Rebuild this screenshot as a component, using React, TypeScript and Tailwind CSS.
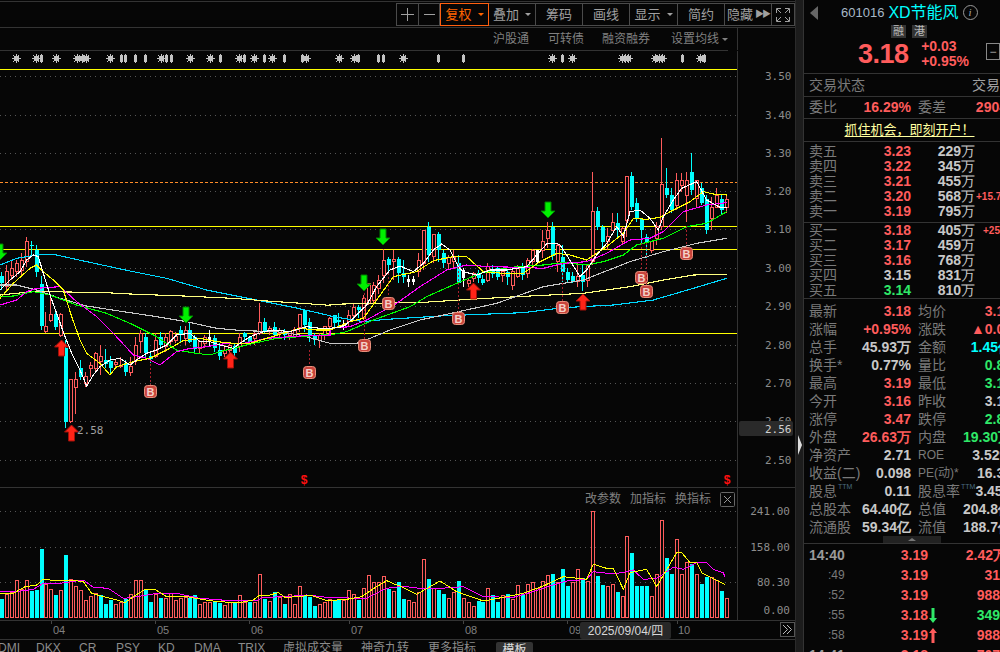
import React from "react"

const RED = "#ff5c5c"
const CYAN = "#00ffff"

type Candle = [string, number, number, number, number]

// traced from the 3x crops: [kind, body top, body bottom, wick top, wick bottom]
const candlesA: Candle[] = [
  ["c", 168, 190, 155, 210], ["r", 155, 200, 135, 210], ["r", 145, 165, 120, 180], ["r", 130, 155, 120, 170],
  ["r", 122, 150, 100, 165], ["r", 65, 125, 50, 140], ["c", 75, 78, 62, 110], ["c", 90, 155, 75, 170],
  ["c", 192, 318, 168, 330], ["r", 318, 335, 275, 340], ["r", 282, 300, 235, 305], ["c", 282, 320, 270, 330],
  ["r", 282, 345, 280, 350], ["c", 385, 605, 360, 625], ["r", 478, 605, 478, 610], ["r", 478, 502, 455, 582],
  ["c", 445, 470, 420, 480], ["r", 468, 490, 455, 500], ["r", 435, 445, 425, 470], ["r", 400, 445, 395, 460],
  ["r", 408, 425, 375, 465], ["c", 420, 432, 388, 445], ["c", 422, 445, 408, 465], ["r", 428, 432, 420, 445],
  ["r", 435, 440, 410, 445], ["c", 430, 455, 420, 468], ["r", 438, 458, 410, 468], ["r", 375, 420, 350, 435],
  ["r", 340, 365, 330, 400], ["c", 352, 400, 340, 415], ["c", 408, 418, 395, 430], ["r", 362, 408, 340, 415],
  ["c", 350, 375, 335, 385], ["r", 352, 380, 340, 395], ["r", 335, 365, 330, 375], ["r", 350, 360, 335, 370],
  ["c", 330, 345, 318, 365], ["r", 330, 355, 318, 375], ["c", 330, 365, 308, 370], ["c", 350, 388, 345, 400],
  ["r", 365, 385, 360, 400], ["r", 352, 370, 345, 385], ["w", 352, 360, 330, 380], ["c", 355, 385, 345, 395],
  ["c", 390, 408, 370, 420], ["r", 390, 400, 375, 410], ["r", 375, 390, 365, 415], ["c", 378, 398, 368, 410],
  ["r", 352, 378, 340, 395], ["c", 340, 352, 335, 365], ["c", 352, 365, 350, 372], ["r", 340, 355, 335, 375],
  ["r", 306, 340, 250, 345], ["c", 306, 335, 295, 340], ["r", 325, 335, 318, 345], ["c", 320, 345, 305, 355],
  ["r", 330, 340, 325, 355], ["c", 332, 345, 328, 360], ["r", 335, 345, 332, 360], ["r", 328, 350, 322, 350],
  ["r", 283, 322, 283, 335], ["c", 270, 315, 270, 335], ["c", 307, 345, 295, 365], ["c", 345, 360, 340, 375],
  ["r", 345, 362, 340, 385], ["r", 320, 345, 318, 360], ["r", 295, 320, 290, 340], ["c", 285, 310, 285, 320],
  ["c", 300, 305, 280, 325], ["w", 315, 318, 300, 330], ["r", 285, 305, 270, 320], ["r", 262, 285, 250, 290],
  ["c", 262, 270, 255, 295], ["r", 235, 295, 225, 300], ["r", 190, 250, 190, 255], ["r", 195, 240, 185, 248],
  ["r", 180, 205, 165, 222], ["r", 120, 165, 88, 190], ["c", 118, 135, 110, 165], ["r", 118, 125, 90, 180],
  ["c", 118, 160, 110, 190], ["c", 158, 172, 120, 190], ["w", 178, 185, 165, 200], ["w", 178, 185, 168, 195],
  ["r", 122, 155, 100, 170], ["r", 30, 130, 30, 150], ["c", 20, 105, 5, 125], ["r", 42, 110, 42, 130],
  ["c", 42, 90, 35, 125], ["c", 100, 130, 90, 145], ["r", 112, 130, 105, 150], ["r", 112, 125, 90, 148],
  ["c", 130, 190, 105, 195], ["w", 150, 175, 145, 200], ["r", 180, 190, 175, 200], ["r", 160, 175, 155, 185],
  ["c", 158, 175, 150, 190], ["c", 178, 190, 165, 195], ["r", 140, 180, 130, 185], ["c", 150, 162, 135, 175],
  ["c", 145, 170, 140, 180], ["r", 155, 165, 150, 185], ["c", 155, 172, 150, 195], ["r", 155, 195, 150, 210],
  ["r", 145, 170, 135, 175], ["c", 145, 165, 130, 180], ["r", 120, 160, 115, 175], ["r", 90, 125, 88, 145],
  ["w", 90, 125, 90, 130], ["r", 65, 90, 30, 115], ["r", 30, 55, 5, 85], ["c", 20, 108, 5, 120],
]

const candlesB: Candle[] = [
  ["r", 345, 395, 340, 425], ["c", 380, 425, 345, 455], ["c", 425, 450, 415, 460], ["c", 438, 452, 425, 460],
  ["r", 438, 455, 395, 470], ["c", 435, 455, 405, 482], ["r", 405, 450, 405, 470], ["r", 243, 395, 127, 405],
  ["c", 243, 290, 232, 300], ["c", 290, 335, 285, 360], ["r", 320, 335, 295, 360], ["r", 278, 300, 250, 300],
  ["c", 278, 300, 250, 325], ["r", 295, 335, 290, 345], ["r", 140, 270, 140, 320], ["c", 137, 232, 127, 240],
  ["c", 220, 265, 205, 275], ["c", 268, 300, 265, 345], ["c", 320, 335, 312, 385], ["r", 335, 360, 335, 370],
  ["r", 290, 325, 275, 345], ["r", 162, 290, 25, 300], ["c", 175, 195, 115, 205], ["c", 195, 240, 175, 250],
  ["r", 150, 225, 128, 240], ["r", 150, 165, 128, 185], ["r", 150, 195, 125, 275], ["c", 127, 180, 70, 195],
  ["r", 150, 205, 150, 230], ["c", 175, 220, 160, 225], ["c", 208, 300, 195, 312], ["r", 232, 265, 200, 300],
  ["r", 195, 232, 175, 235], ["c", 208, 240, 195, 255], ["r", 208, 232, 195, 250],
]

const toY = (c: Candle, off: number): Candle => [c[0], off + c[1] / 3, off + c[2] / 3, off + c[3] / 3, off + c[4] / 3]
const candles = [...candlesA.map((c) => toY(c, 220)), ...candlesB.map((c) => toY(c, 130))]
const barX = (i: number) => Math.floor(1.3 + (i * 725) / 146)

// volume heights, minus means a falling (cyan) day
const volumes = [
  -19, 24, 26, 38, 29, 38, -27, -28, -69, 34, 29, -23, 28, -63, 39, 32, 28, 18, 22, 25, -23, -14, -18, 14, 16, -19, 24,
  38, 38, -28, -16, 24, -20, 20, 25, 18, 20, 21, -20, -23, 14, 16, 16, -17, -15, 13, 16, -15, 23, 16, -16, 16, 44, -19,
  17, -26, 21, -14, 24, 14, 32, -23, -21, -12, 14, 16, 19, -18, -18, 18, 28, 24, -18, 30, 43, 36, 36, 42, -29, 27, -36,
  -19, 18, 16, 26, 59, -39, 30, -28, -24, 20, 26, -37, 20, 16, 12, -17, -16, 30, -23, -16, 23, -24, 19, 33, -23, 34, 36,
  30, 37, 43, -44, 36, -49, -32, 36, 49, -40, 37, 107, -42, -33, 32, 34, -26, 22, 82, -65, -32, -32, -32, 22, 44, 98,
  -60, -44, 79, 44, 56, -54, 44, -34, -41, 41, 38, -27, 20,
]

type P = [number, number]
const line = (parts: { xo: number; yo: number; p: P[] }[]) =>
  parts.flatMap(({ xo, yo, p }) => p.map(([x, y]) => `${xo + x / 3},${yo + y / 3}`)).join(" ")

const maLines: { color: string; points: string }[] = [
  {
    color: "#00d8ff",
    points: line([
      { xo: 0, yo: 220, p: [[0, 135], [50, 115], [110, 105], [160, 103], [260, 125], [390, 153], [500, 175], [620, 210], [770, 240], [880, 262], [990, 287]] },
      { xo: 330, yo: 130, p: [[0, 558], [100, 575], [170, 568], [330, 558], [480, 552], [580, 548], [700, 533], [850, 525], [970, 510], [1090, 475], [1190, 445]] },
    ]),
  },
  {
    color: "#ffff80",
    points: line([
      { xo: 0, yo: 220, p: [[0, 225], [100, 215], [300, 217], [390, 222], [550, 228], [700, 235], [800, 243], [950, 253], [990, 256]] },
      { xo: 330, yo: 130, p: [[0, 523], [130, 520], [280, 517], [420, 508], [560, 500], [760, 490], [900, 470], [1000, 450], [1090, 435], [1190, 433]] },
    ]),
  },
  {
    color: "#c8c8c8",
    points: line([
      { xo: 0, yo: 220, p: [[0, 195], [50, 195], [110, 210], [180, 235], [260, 258], [370, 275], [470, 290], [560, 305], [650, 325], [730, 332], [830, 335], [900, 345], [990, 370]] },
      { xo: 330, yo: 130, p: [[0, 640], [80, 640], [120, 625], [180, 600], [270, 570], [340, 555], [500, 520], [640, 470], [760, 450], [900, 395], [1000, 365], [1100, 340], [1190, 325]] },
    ]),
  },
  {
    color: "#00ff00",
    points: line([
      { xo: 0, yo: 220, p: [[0, 230], [40, 228], [100, 215], [150, 225], [230, 255], [320, 280], [390, 310], [470, 350], [530, 390], [590, 400], [630, 405], [660, 395], [720, 380], [760, 370], [830, 355], [900, 350], [990, 343]] },
      { xo: 330, yo: 130, p: [[0, 615], [50, 605], [130, 570], [240, 530], [290, 500], [380, 460], [450, 430], [540, 412], [640, 405], [700, 398], [770, 405], [820, 395], [880, 375], [920, 345], [1000, 325], [1070, 290], [1130, 280], [1190, 245]] },
    ]),
  },
  {
    color: "#ff00ff",
    points: line([
      { xo: 0, yo: 220, p: [[0, 255], [50, 240], [80, 215], [110, 205], [180, 200], [230, 245], [290, 290], [340, 340], [400, 405], [440, 415], [480, 435], [530, 395], [570, 385], [620, 380], [680, 370], [730, 370], [800, 355], [900, 348], [990, 345]] },
      { xo: 330, yo: 130, p: [[0, 595], [60, 590], [110, 570], [200, 520], [270, 470], [350, 420], [410, 405], [480, 410], [570, 412], [640, 415], [700, 400], [770, 395], [830, 370], [900, 330], [960, 325], [1000, 305], [1060, 245], [1130, 225], [1190, 218]] },
    ]),
  },
  {
    color: "#ffff00",
    points: line([
      { xo: 0, yo: 220, p: [[0, 235], [40, 190], [90, 145], [110, 135], [130, 155], [160, 180], [190, 210], [215, 290], [240, 360], [260, 400], [300, 430], [330, 465], [350, 440], [400, 425], [450, 415], [500, 390], [550, 362], [600, 355], [650, 365], [700, 370], [750, 370], [800, 355], [850, 340], [900, 325], [950, 330], [990, 330]] },
      { xo: 330, yo: 130, p: [[0, 600], [60, 575], [100, 565], [140, 510], [190, 440], [260, 425], [310, 392], [370, 380], [410, 380], [460, 425], [520, 430], [580, 430], [630, 395], [680, 370], [720, 375], [770, 390], [830, 350], [880, 310], [910, 265], [950, 268], [990, 262], [1030, 240], [1080, 215], [1120, 185], [1150, 192], [1190, 195]] },
    ]),
  },
  {
    color: "#ffffff",
    points: line([
      { xo: 0, yo: 220, p: [[0, 210], [30, 180], [60, 155], [80, 120], [100, 105], [115, 110], [130, 160], [150, 225], [170, 280], [195, 350], [215, 400], [240, 450], [260, 498], [280, 465], [300, 440], [330, 420], [360, 415], [390, 435], [410, 420], [440, 400], [470, 390], [500, 375], [530, 345], [570, 340], [600, 365], [630, 365], [660, 375], [700, 385], [720, 370], [750, 350], [790, 335], [820, 330], [870, 335], [920, 320], [960, 325], [990, 325]] },
      { xo: 330, yo: 220, p: [[0, 325], [40, 320], [70, 295], [110, 255], [140, 200], [180, 150], [210, 138], [250, 155], [280, 130], [310, 90], [335, 72], [360, 90], [385, 140], [400, 155], [440, 165], [480, 150], [530, 150], [590, 140], [620, 105], [650, 72], [680, 70]] },
      { xo: 330, yo: 130, p: [[690, 345], [710, 375], [750, 440], [770, 420], [800, 375], [830, 340], [860, 290], [880, 320], [900, 245], [930, 240], [960, 265], [985, 300], [1000, 260], [1030, 210], [1055, 175], [1100, 155], [1130, 210], [1170, 232], [1190, 232]] },
    ]),
  },
]

const volYellow = line([
  { xo: 0, yo: 480, p: [[0, 340], [40, 340], [75, 320], [110, 315], [130, 297], [150, 300], [180, 303], [210, 300], [250, 305], [275, 340], [310, 350], [350, 360], [375, 368], [400, 350], [435, 328], [465, 328], [500, 350], [560, 350], [600, 357], [650, 365], [720, 368], [760, 360], [780, 345], [810, 345], [835, 338], [855, 352], [900, 350], [930, 345], [980, 362], [1040, 358], [1085, 350], [1130, 320], [1160, 302], [1190, 315]] },
  { xo: 400, yo: 480, p: [[0, 318], [50, 343], [120, 303], [170, 335], [250, 363], [320, 350], [370, 340], [430, 318], [490, 290], [560, 298], [580, 253], [620, 265], [640, 265], [670, 328], [690, 278], [740, 268], [770, 320], [830, 218], [845, 218], [870, 248], [890, 248], [905, 278], [975, 313]] },
])
const volMagenta = line([
  { xo: 0, yo: 480, p: [[0, 335], [50, 335], [100, 328], [130, 310], [180, 310], [250, 300], [280, 322], [325, 325], [370, 355], [400, 352], [460, 342], [530, 340], [600, 355], [690, 362], [770, 362], [790, 352], [860, 350], [920, 345], [990, 353], [1100, 355], [1160, 325], [1200, 320]] },
  { xo: 400, yo: 480, p: [[0, 318], [60, 325], [120, 325], [190, 320], [250, 350], [340, 352], [400, 335], [450, 318], [500, 303], [560, 298], [580, 275], [640, 282], [680, 275], [700, 270], [730, 298], [770, 295], [820, 262], [850, 268], [890, 248], [920, 248], [940, 268], [970, 278], [975, 292]] },
])

const axisLabels: [string, number][] = [
  ["3.50", 76], ["3.40", 115], ["3.30", 153], ["3.20", 191], ["3.10", 229], ["3.00", 268], ["2.90", 306], ["2.80", 345], ["2.70", 383], ["2.60", 421], ["2.50", 460],
]
const bMarks: [number, number, number][] = [
  [150, 391, 360], [309, 372, 350], [364, 345, 293], [388, 303, 273], [458, 318, 263], [562, 307, 263], [641, 277, 243], [646, 291, 243], [686, 253, 226],
]
const greenArrows: P[] = [[0, 252], [186, 315], [364, 283], [383, 237], [548, 210]]
const redArrows: P[] = [[61.5, 348], [71.5, 433], [230.5, 360], [473.5, 291], [583, 302]]
const suns = [16, 36, 56, 77, 82, 86, 110, 161, 190, 210, 239, 254, 272, 306, 339, 354, 403, 552, 572, 622, 625, 628, 655, 659, 662, 700]
const pills = [41, 121, 125, 135, 145, 166, 171, 220, 244, 264, 284, 302, 383, 438, 463, 562, 682, 704, 358, 378]

function Arrow({ x, y, up }: { x: number; y: number; up: boolean }) {
  const s = up ? 1 : -1
  const pts = [[0, -8], [7, -1], [3, -1], [3, 8], [-3, 8], [-3, -1], [-7, -1]].map(([a, b]) => `${x + a},${y + b * s}`).join(" ")
  return <polygon points={pts} fill={up ? "#ff2418" : "#00f000"} stroke={up ? "#a01008" : "#008000"} strokeWidth="1" />
}

function Chart() {
  return (
    <svg width="795" height="419" viewBox="0 69 795 419" className="block shrink-0">
      {axisLabels.map(([, y]) => (
        <line key={y} x1="0" x2="737" y1={y + 0.5} y2={y + 0.5} stroke="#555" strokeDasharray="1 4" />
      ))}
      {[69.5, 226.5, 249.5, 333.5].map((y) => (
        <line key={y} x1="0" x2="737" y1={y} y2={y} stroke="#ffff00" />
      ))}
      <line x1="0" x2="737" y1="182.5" y2="182.5" stroke="#ff8c28" strokeDasharray="3 2" />
      <g shapeRendering="crispEdges">
        {candles.map(([k, top, bot, wt, wb], i) => {
          const x = barX(i)
          const color = k === "r" ? RED : k === "c" ? CYAN : "#fff"
          return (
            <g key={i}>
              <line x1={x + 0.5} x2={x + 0.5} y1={wt} y2={wb} stroke={color} />
              {k === "r" ? (
                <rect x={x - 0.5} y={top} width="3" height={Math.max(bot - top, 1)} fill="#060606" stroke={color} />
              ) : (
                <rect x={x - 1} y={top} width={k === "c" ? 4 : 3} height={Math.max(bot - top, 1)} fill={color} />
              )}
            </g>
          )
        })}
        {maLines.map((m) => (
          <polyline key={m.color} points={m.points} fill="none" stroke={m.color} strokeWidth="1.1" />
        ))}
      </g>
      {bMarks.map(([x, y, to]) => (
        <g key={`${x}-${y}`}>
          <line x1={x + 0.5} x2={x + 0.5} y1={to} y2={y - 6} stroke="#a8202c" strokeDasharray="2 2" />
          <rect x={x - 5.5} y={y - 5.5} width="12" height="12" rx="3" fill="#c8443c" stroke="#e8907c" />
          <text x={x + 0.5} y={y + 4.5} textAnchor="middle" fontSize="11" fontWeight="700" fill="#f4d0c8">B</text>
        </g>
      ))}
      {greenArrows.map(([x, y]) => <Arrow key={x} x={x} y={y} up={false} />)}
      {redArrows.map(([x, y]) => <Arrow key={x} x={x} y={y} up />)}
      <text x="77" y="434" fontSize="11" fill="#a0a0a0" className="font-['DejaVu_Sans_Mono',monospace]">2.58</text>
      <text x="304" y="484" fontSize="12" fontWeight="700" textAnchor="middle" fill="#ff1010">$</text>
      <text x="727" y="484" fontSize="12" fontWeight="700" textAnchor="middle" fill="#ff1010">$</text>
      <line x1="737.5" x2="737.5" y1="69" y2="488" stroke="#333" />
      <g fontSize="11" fill="#8c8c8c" className="font-['DejaVu_Sans_Mono',monospace]">
        {axisLabels.map(([t, y]) => (
          <text key={t} x="765" y={y + 4}>{t}</text>
        ))}
      </g>
      <rect x="739" y="421" width="54" height="15" rx="2" fill="#2a2a2a" />
      <text x="765" y="433" fontSize="11" fill="#d0d0d0" className="font-['DejaVu_Sans_Mono',monospace]">2.56</text>
      <line x1="0" x2="795" y1="487.5" y2="487.5" stroke="#333" />
    </svg>
  )
}

function VolumePane() {
  return (
    <div className="relative h-[133px] w-[795px] shrink-0">
      <svg width="795" height="133" viewBox="0 488 795 133" className="block">
        {[511, 547, 582].map((y) => (
          <line key={y} x1="0" x2="737" y1={y + 0.5} y2={y + 0.5} stroke="#555" strokeDasharray="1 4" />
        ))}
        <g shapeRendering="crispEdges">
          {volumes.map((v, i) => {
            const x = barX(i)
            const h = Math.abs(v)
            return v > 0 ? (
              <rect key={i} x={x - 0.5} y={618 - h + 0.5} width="3" height={h - 1} fill="#060606" stroke={RED} />
            ) : (
              <rect key={i} x={x - 1} y={618 - h} width="4" height={h} fill={CYAN} />
            )
          })}
          <polyline points={volMagenta} fill="none" stroke="#ff00ff" />
          <polyline points={volYellow} fill="none" stroke="#ffff00" />
        </g>
        <line x1="737.5" x2="737.5" y1="488" y2="620" stroke="#333" />
        <g fontSize="11" fill="#8c8c8c" textAnchor="end" className="font-['DejaVu_Sans_Mono',monospace]">
          <text x="790" y="515">241.00</text>
          <text x="790" y="551">158.00</text>
          <text x="790" y="586">80.30</text>
          <text x="790" y="614">0.00</text>
        </g>
        <line x1="0" x2="795" y1="620.5" y2="620.5" stroke="#333" />
      </svg>
      <div className="absolute left-[585px] top-[3px] flex items-center gap-[9px] text-[12px] leading-[16px] text-[#808080]">
        <span>改参数</span>
        <span>加指标</span>
        <span>换指标</span>
        <svg width="15" height="15" viewBox="0 0 15 15" fill="none" stroke="#666">
          <rect x="0.5" y="0.5" width="14" height="14" rx="1" />
          <path d="M4 4l7 7M11 4l-7 7" stroke="#999" />
        </svg>
      </div>
    </div>
  )
}

function DateAxis() {
  const ticks: [string, number, number][] = [
    ["04", 51, 59], ["05", 155, 163], ["06", 249, 257], ["07", 349, 357], ["08", 463, 471], ["09", 567, 575], ["10", 677, 684],
  ]
  return (
    <div className="relative h-[19px] w-[795px] shrink-0 border-b border-[#333]">
      <svg width="795" height="18" viewBox="0 621 795 18" className="block">
        {ticks.map(([t, x, c]) => (
          <g key={t}>
            <line x1={x + 0.5} x2={x + 0.5} y1="621" y2="624" stroke="#444" />
            <text x={c} y="634" textAnchor="middle" fontSize="11" fill="#808080">{t}</text>
          </g>
        ))}
      </svg>
      <div className="absolute left-[580px] top-[1px] flex h-[17px] w-[91px] items-center justify-center rounded-[2px] bg-[#282828] text-[12px] text-[#d8d8d8]">
        2025/09/04/四
      </div>
      <svg width="15" height="15" viewBox="0 0 15 15" fill="none" stroke="#888" className="absolute left-[780px] top-[1px]">
        <rect x="0.5" y="0.5" width="14" height="14" stroke="#555" />
        <path d="M3 3l4.5 4.5L3 12M7 3l4.5 4.5L7 12" stroke="#bbb" />
      </svg>
    </div>
  )
}

function Toolbar() {
  const btn = "flex h-full items-center justify-center border-r border-[#4a4a4a] text-[13px] text-[#a0a0a0]"
  const caret = <span className="ml-[6px] h-0 w-0 border-x-[3px] border-t-[3px] border-x-transparent border-t-[#a0a0a0]" />
  return (
    <div className="mt-px flex h-[27px] shrink-0 items-center justify-end border-y border-[#333]">
      <div className="flex h-[23px] border border-[#4a4a4a]">
        <div className={`${btn} w-[22px]`}>
          <svg width="13" height="13" viewBox="0 0 13 13" stroke="#a0a0a0"><path d="M6.5 0v13M0 6.5h13" /></svg>
        </div>
        <div className={`${btn} w-[21px]`}>
          <svg width="11" height="13" viewBox="0 0 11 13" stroke="#a0a0a0"><path d="M0 6.5h11" /></svg>
        </div>
        <div className="-my-px flex h-[23px] w-[49px] items-center justify-center border border-[#ff6010] text-[13px] text-[#ff6400]">
          复权<span className="ml-[6px] h-0 w-0 border-x-[3px] border-t-[3px] border-x-transparent border-t-[#ff6400]" />
        </div>
        <div className={`${btn} w-[47px]`}>叠加{caret}</div>
        <div className={`${btn} w-[47px]`}>筹码</div>
        <div className={`${btn} w-[47px]`}>画线</div>
        <div className={`${btn} w-[48px]`}>显示{caret}</div>
        <div className={`${btn} w-[47px]`}>简约</div>
        <div className={`${btn} w-[47px]`}>
          隐藏<span className="ml-[2px] text-[9px] tracking-[-2px]">▶▶</span>
        </div>
        <div className="flex h-full w-[22px] items-center justify-center">
          <svg width="14" height="14" viewBox="0 0 14 14" fill="none" stroke="#a0a0a0">
            <path d="M5 .5H.5V5M9 .5h4.5V5M5 13.5H.5V9M9 13.5h4.5V9M1 1l4 4M13 1 9 5M1 13l4-4M13 13 9 9" />
          </svg>
        </div>
      </div>
    </div>
  )
}

function MarkerRow() {
  return (
    <svg width="738" height="19" viewBox="0 50 738 19" className="block shrink-0" shapeRendering="crispEdges">
      {suns.map((x) => (
        <g key={`s${x}`} fill="#c4c4c4">
          <rect x={x - 2} y="55" width="5" height="5" />
          <rect x={x - 4} y="57" width="9" height="1" />
          <rect x={x} y="53" width="1" height="9" />
          <rect x={x - 3} y="54" width="1" height="1" />
          <rect x={x + 2} y="54" width="1" height="1" />
          <rect x={x - 3} y="60" width="1" height="1" />
          <rect x={x + 2} y="60" width="1" height="1" />
        </g>
      ))}
      {pills.map((x) => (
        <g key={`p${x}`} fill="#c4c4c4">
          <rect x={x - 1} y="54" width="3" height="7" />
          <rect x={x} y="53" width="1" height="9" />
        </g>
      ))}
    </svg>
  )
}

function Tabs() {
  const items: [string, string][] = [
    ["DMI", "w-[38px] -ml-[2px]"], ["DKX", "w-[43px]"], ["CR", "w-[37px]"], ["PSY", "w-[42px]"], ["KD", "w-[36px]"], ["DMA", "w-[44px]"], ["TRIX", "w-[45px]"], ["虚拟成交量", "w-[78px]"], ["神奇九转", "w-[67px]"], ["更多指标", "w-[68px]"],
  ]
  return (
    <div className="flex h-[12px] items-start overflow-hidden text-[12px] leading-[16px] text-[#8c8c8c]">
      {items.map(([t, w]) => (
        <span key={t} className={`${w} shrink-0`}>{t}</span>
      ))}
      <span className="mt-[2px] flex h-[14px] w-[37px] shrink-0 justify-center rounded-t-[2px] bg-[#333] text-[#e0e0e0]">模板</span>
    </div>
  )
}

const num = "font-['Liberation_Sans',sans-serif] font-bold text-[14px]"

function OrderRow({ label, price, color, vol, diff, diffGap }: { label: string; price: string; color: string; vol: string; diff?: string; diffGap?: boolean }) {
  return (
    <div className="grid h-[15px] grid-cols-[107px_64px_auto] text-[14px] leading-[15px]">
      <div className="flex justify-between pl-[5px]">
        <span className="text-[#7a7a7a]">{label}</span>
        <span className={num} style={{ color }}>{price}</span>
      </div>
      <span className={`${num} text-right text-[#c8c8c8]`}>
        {vol}<span className="font-normal">万</span>
      </span>
      <span className={`${diffGap ? "ml-[8px]" : "ml-px"} whitespace-nowrap font-['Liberation_Sans',sans-serif] text-[10px] font-bold text-[#ff5c5c]`}>{diff}</span>
    </div>
  )
}

type Stat = [string, string, string, string, string, string, boolean?]
const white = "#c8c8c8"
const green = "#2fe868"
const stats: Stat[] = [
  ["最新", "3.18", RED, "均价", "3.16", RED],
  ["涨幅", "+0.95%", RED, "涨跌", "▲0.03", RED],
  ["总手", "45.93万", white, "金额", "1.45亿", CYAN],
  ["换手*", "0.77%", white, "量比", "0.85", green],
  ["最高", "3.19", RED, "最低", "3.14", green],
  ["今开", "3.16", RED, "昨收", "3.15", white],
  ["涨停", "3.47", RED, "跌停", "2.84", green],
  ["外盘", "26.63万", RED, "内盘", "19.30万", green],
  ["净资产", "2.71", white, "ROE", "3.52%", white, true],
  ["收益(二)", "0.098", white, "PE(动)*", "16.32", white, true],
  ["股息", "0.11", white, "股息率", "3.45%", white],
  ["总股本", "64.40亿", white, "总值", "204.8亿", white],
  ["流通股", "59.34亿", white, "流值", "188.7亿", white],
]

function StatRow({ s }: { s: Stat }) {
  const [a, av, ac, b, bv, bc, small] = s
  const ttm = a === "股息"
  return (
    <div className="grid h-[18px] grid-cols-[107px_101px] text-[14px] leading-[18px] text-[#7a7a7a]">
      <div className="flex justify-between pl-[5px]">
        <span className="whitespace-nowrap">
          {a}
          {ttm && <sup className="ml-px align-[4px] text-[7px] text-[#4a6a80]">TTM</sup>}
        </span>
        <span className={num} style={{ color: ac }}>{av}</span>
      </div>
      <div className="flex justify-between pl-[7px]">
        <span className={`whitespace-nowrap ${small ? "text-[12px]" : ""}`}>
          {b}
          {ttm && <sup className="ml-px align-[4px] text-[7px] text-[#4a6a80]">TTM</sup>}
        </span>
        <span className={num} style={{ color: bc }}>{bv}</span>
      </div>
    </div>
  )
}

type Trade = [string, string, string, string, "up" | "down" | null]
const trades: Trade[] = [
  ["14:40", "3.19", "2.42万", RED, null],
  [":49", "3.19", "31", RED, null],
  [":52", "3.19", "988", RED, null],
  [":55", "3.18", "349", green, "down"],
  [":58", "3.19", "988", RED, "up"],
  ["14:41", "3.18", "707", RED, null],
]

function TradeRow({ t }: { t: Trade }) {
  const [time, price, vol, color, dir] = t
  return (
    <div className="grid h-[20px] grid-cols-[124px_72px] text-[14px] leading-[20px]">
      <div className="relative flex justify-between pl-[5px]">
        {time.length > 3 ? (
          <span className={`${num} text-[#9a9a9a]`}>{time}</span>
        ) : (
          <span className="ml-[19px] font-['Liberation_Sans',sans-serif] text-[12px] text-[#7a7a7a]">{time}</span>
        )}
        <span className={num} style={{ color: RED }}>{price}</span>
        {dir && (
          <svg width="8" height="15" viewBox="0 0 8 15" className="absolute left-[125px] top-[3px]" fill={dir === "up" ? RED : green}>
            {dir === "up" ? <path d="M4 0l4 5H5.5v10h-3V5H0z" /> : <path d="M4 15l4-5H5.5V0h-3v10H0z" />}
          </svg>
        )}
      </div>
      <span className={`${num} whitespace-nowrap text-right ${vol.endsWith("万") ? "-mr-[7px]" : ""}`} style={{ color }}>{vol}</span>
    </div>
  )
}

function QuotePanel() {
  const sell: [string, string, string, string?][] = [
    ["卖五", "3.23", "229"], ["卖四", "3.22", "345"], ["卖三", "3.21", "455"], ["卖二", "3.20", "568", "+15.7"], ["卖一", "3.19", "795"],
  ]
  const buy: [string, string, string, string, string?][] = [
    ["买一", "3.18", RED, "405", "+25"], ["买二", "3.17", RED, "459"], ["买三", "3.16", RED, "768"], ["买四", "3.15", white, "831"], ["买五", "3.14", green, "810"],
  ]
  return (
    <div className="h-[652px] w-[197px] shrink-0 overflow-hidden border-l border-[#333]">
      <div className="h-[652px] w-[210px]">
        {/* header */}
        <div className="h-[74px] w-[196px] border-b border-[#333]">
          <div className="flex h-[25px] items-center pl-[6px]">
            <span className="h-0 w-0 border-y-[7px] border-r-[8px] border-y-transparent border-r-[#666]" />
            <span className="ml-[23px] font-['Liberation_Sans',sans-serif] text-[13px] text-[#a8b8c8]">601016</span>
            <span className="ml-[4px] whitespace-nowrap font-['Liberation_Sans','Noto_Sans_CJK_SC',sans-serif] text-[16px] leading-none text-[#00ffff]">XD节能风</span>
            <span className="ml-[4px] flex h-[15px] w-[15px] items-center justify-center rounded-full border border-[#999] font-['Liberation_Serif',serif] text-[11px] italic text-[#aaa]">i</span>
          </div>
          <div className="flex h-[13px] gap-[6px] pl-[87px] text-[11px] leading-[13px] text-[#bbb]">
            <span className="w-[15px] bg-[#333] text-center">融</span>
            <span className="w-[15px] bg-[#333] text-center">港</span>
          </div>
          <div className="flex items-start pl-[54px] pt-[1px]">
            <span className="w-[67px] font-['Liberation_Sans',sans-serif] text-[27px] font-bold leading-[30px] tracking-[-0.5px] text-[#ff5c5c]">3.18</span>
            <div className={`${num} flex flex-col leading-[15px] text-[#ff5c5c]`}>
              <span>+0.03</span>
              <span>+0.95%</span>
            </div>
            <span className="ml-[17px] mt-[4px] flex h-[17px] w-[14px] shrink-0 items-center justify-center border border-[#888] text-[12px] text-[#aaa]">−</span>
          </div>
        </div>
        <div className="flex h-[23px] w-[196px] items-center justify-between overflow-hidden whitespace-nowrap border-b border-[#333] pl-[5px] text-[14px] text-[#7a7a7a]">
          <span>交易状态</span>
          <span className="text-[#a0a0a0]">交易</span>
        </div>
        <div className="grid h-[22px] w-[208px] grid-cols-[107px_101px] border-b border-[#333] text-[14px] leading-[21px] text-[#7a7a7a]">
          <div className="flex justify-between pl-[5px]">
            <span>委比</span>
            <span className={`${num} text-[#ff5c5c]`}>16.29%</span>
          </div>
          <div className="flex justify-between pl-[7px] pr-[5px]">
            <span>委差</span>
            <span className={`${num} text-[#ff5c5c]`}>2904</span>
          </div>
        </div>
        <div className="flex h-[23px] w-[196px] items-center justify-center border-b border-[#333] pl-[15px] text-[13px] text-[#ffffa0] underline underline-offset-2">
          抓住机会，即刻开户！
        </div>
        <div className="h-[81px] w-full border-b border-[#333] pt-[2px]">
          {sell.map(([l, p, v, d]) => (
            <OrderRow key={l} label={l} price={p} color={RED} vol={v} diff={d} />
          ))}
        </div>
        <div className="h-[76px] w-full border-b border-[#333]">
          {buy.map(([l, p, c, v, d]) => (
            <OrderRow key={l} label={l} price={p} color={c} vol={v} diff={d} diffGap />
          ))}
        </div>
        <div className="pt-[3px]">
          {stats.map((s) => (
            <StatRow key={s[0]} s={s} />
          ))}
        </div>
        <div className="h-[8px] w-[196px] border-b border-[#333]">
          <div className="ml-[79px] flex h-[7px] w-[58px] items-center justify-center bg-[#222]">
            <span className="h-0 w-0 border-x-[4px] border-b-[3px] border-x-transparent border-b-[#777]" />
          </div>
        </div>
        <div className="w-[196px] pt-[1px]">
          {trades.map((t) => (
            <TradeRow key={t[0]} t={t} />
          ))}
        </div>
      </div>
    </div>
  )
}

export default function App() {
  return (
    <div className="flex h-[652px] w-[1000px] overflow-hidden bg-[#060606] font-['Liberation_Sans','Noto_Sans_CJK_SC',sans-serif]">
      <div className="flex w-[795px] shrink-0 flex-col">
        <Toolbar />
        <div className="flex h-[22px] w-[738px] shrink-0 items-center justify-end border-r border-[#333] pr-[9px] text-[12px] text-[#808080]">
          <div className="flex items-center">
            <span>沪股通</span>
            <span className="ml-[19px]">可转债</span>
            <span className="ml-[18px]">融资融券</span>
            <span className="ml-[21px]">设置均线</span>
            <span className="ml-[3px] h-0 w-0 border-x-[3px] border-t-[3px] border-x-transparent border-t-[#808080]" />
          </div>
        </div>
        <div className="h-px w-[728px] shrink-0 bg-[#333]" />
        <div className="h-[18px] w-[738px] shrink-0 overflow-hidden border-r border-[#333]">
          <MarkerRow />
        </div>
        <Chart />
        <VolumePane />
        <DateAxis />
        <Tabs />
      </div>
      <div className="h-[652px] w-[8px] shrink-0 border-l border-[#2a2a2a] bg-[#1c1c1c] pl-[2px] pt-[435px]">
        <span className="block h-0 w-0 border-y-[10px] border-l-[4px] border-y-transparent border-l-[#ddd]" />
      </div>
      <QuotePanel />
    </div>
  )
}
